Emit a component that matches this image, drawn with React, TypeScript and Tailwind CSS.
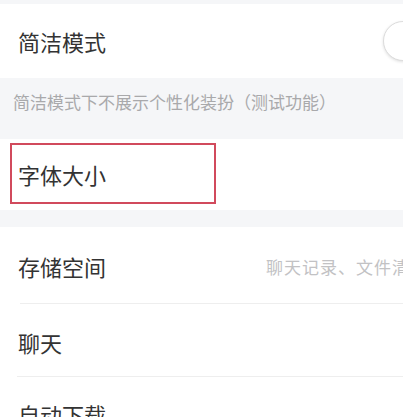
import React from "react";

const font = { fontFamily: '"Noto Sans CJK SC", "Noto Sans", sans-serif' };

export default function App() {
  return (
    <div
      className="w-[403px] h-[417px] overflow-hidden bg-[#f5f6f8] flex flex-col"
      style={font}
    >
      <div className="h-[4px] shrink-0" />
      {/* 简洁模式 */}
      <div className="h-[74px] shrink-0 bg-white flex items-center pl-[18px] overflow-hidden">
        <span className="text-[22px] leading-none text-[#333333]">简洁模式</span>
        <div className="ml-auto mr-[-20px] w-[40px] h-[40px] rounded-full bg-white border border-[#dcdcdc] shadow-[0_1px_3px_rgba(0,0,0,0.12)] shrink-0" />
      </div>
      {/* caption */}
      <div className="h-[61px] shrink-0 pl-[13px] pt-[12px]">
        <span className="text-[17px] leading-[18px] text-[#a9a9ab] whitespace-nowrap">
          简洁模式下不展示个性化装扮（测试功能）
        </span>
      </div>
      {/* 字体大小 */}
      <div className="h-[71px] shrink-0 bg-white flex items-start pt-[4px] pl-[10px]">
        <div className="w-[206px] h-[61px] border-2 border-[#d14a5c] flex items-center pl-[6px]">
          <span className="text-[22px] leading-none text-[#333333]">字体大小</span>
        </div>
      </div>
      <div className="h-[17px] shrink-0" />
      {/* list */}
      <div className="flex-1 bg-white flex flex-col">
        <div className="h-[76px] shrink-0 flex items-center pl-[18px] pt-[2px] overflow-hidden whitespace-nowrap">
          <span className="w-[248px] shrink-0 text-[22px] leading-none text-[#333333]">存储空间</span>
          <span className="shrink-0 text-[17px] tracking-[1px] leading-none text-[#c2c2c4]">聊天记录、文件清理</span>
        </div>
        <div className="h-px ml-[20px] bg-[#eeeeee] shrink-0" />
        <div className="h-[72px] shrink-0 flex items-center pl-[18px] pt-[4px]">
          <span className="text-[22px] leading-none text-[#333333]">聊天</span>
        </div>
        <div className="h-px ml-[17px] bg-[#eeeeee] shrink-0" />
        <div className="h-[72px] shrink-0 flex items-center pl-[18px] pt-[2px]">
          <span className="text-[22px] leading-none text-[#333333]">自动下载</span>
        </div>
      </div>
    </div>
  );
}
